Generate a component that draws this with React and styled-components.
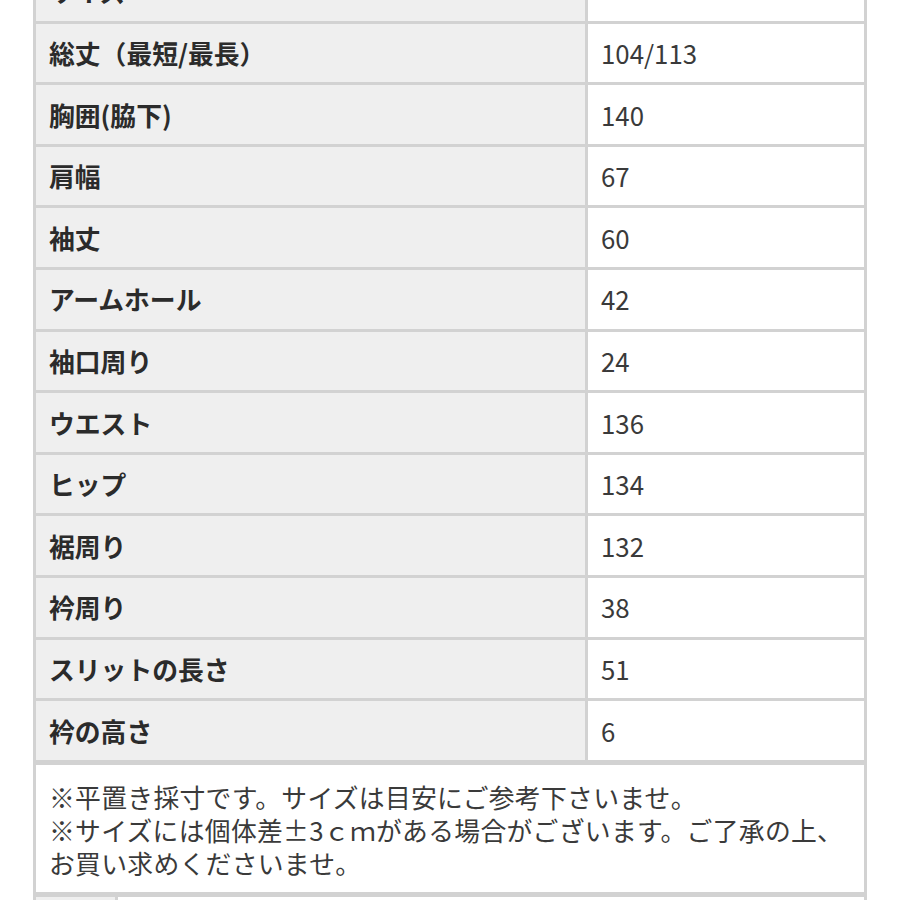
import React from 'react';
import styled, { createGlobalStyle } from 'styled-components';

const GlobalStyle = createGlobalStyle`
  html, body { margin: 0; padding: 0; background: #ffffff; }
  body {
    font-family: "Noto Sans CJK JP", "Noto Sans", sans-serif;
    color: #333333;
    overflow: hidden;
  }
`;

const Page = styled.div`
  width: 900px;
  height: 900px;
  overflow: hidden;
  position: relative;
  background: #ffffff;
`;

const Sheet = styled.div`
  margin: -41px 0 0 33px;
  width: 834px;
  background: #d2d2d2;
  padding: 3px;
  box-sizing: border-box;
  display: flex;
  flex-direction: column;
  gap: 5px;
`;

const SizeGrid = styled.div`
  display: grid;
  grid-template-columns: 549px 276px;
  grid-auto-rows: 58.6px;
  gap: 3px;
`;

const Cell = styled.div`
  display: flex;
  align-items: center;
  padding: 0 13px;
  font-size: 25.8px;
  line-height: 1;
  background: ${({ $head }) => ($head ? '#efefef' : '#ffffff')};
  font-weight: ${({ $head }) => ($head ? 700 : 400)};
  color: ${({ $head }) => ($head ? '#2b2b2b' : '#3a3a3a')};
  white-space: nowrap;
`;

const Note = styled.div`
  background: #ffffff;
  padding: 15px 13px 13px;
  font-size: 25.8px;
  line-height: 33px;
  letter-spacing: 0.3px;
  color: #3a3a3a;
  white-space: nowrap;
`;

const FootRow = styled.div`
  display: grid;
  grid-template-columns: 79px 1fr;
  gap: 3px;
  height: 40px;
`;

const FootCell = styled.div`
  background: ${({ $head }) => ($head ? '#efefef' : '#ffffff')};
`;

const rows = [
  ['サイズ', ''],
  ['総丈（最短/最長）', '104/113'],
  ['胸囲(脇下)', '140'],
  ['肩幅', '67'],
  ['袖丈', '60'],
  ['アームホール', '42'],
  ['袖口周り', '24'],
  ['ウエスト', '136'],
  ['ヒップ', '134'],
  ['裾周り', '132'],
  ['衿周り', '38'],
  ['スリットの長さ', '51'],
  ['衿の高さ', '6'],
];

export default function App() {
  return (
    <Page>
      <GlobalStyle />
      <Sheet>
        <SizeGrid>
          {rows.map(([label, value]) => (
            <React.Fragment key={label}>
              <Cell $head>{label}</Cell>
              <Cell>{value}</Cell>
            </React.Fragment>
          ))}
        </SizeGrid>
        <Note>
          ※平置き採寸です。サイズは目安にご参考下さいませ。<br />
          ※サイズには個体差±3ｃｍがある場合がございます。ご了承の上、<br />
          お買い求めくださいませ。
        </Note>
        <FootRow>
          <FootCell $head />
          <FootCell />
        </FootRow>
      </Sheet>
    </Page>
  );
}
